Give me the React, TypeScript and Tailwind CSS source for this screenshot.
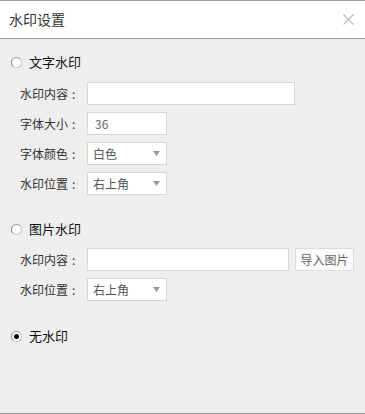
import React from 'react'

const font = { fontFamily: '"Noto Sans CJK SC", "Noto Sans", sans-serif' }

const Radio: React.FC<{ checked?: boolean; label: string }> = ({ checked, label }) => (
  <div className="flex h-[20px] items-center pl-[11px]">
    <span className="flex h-[11px] w-[11px] items-center justify-center rounded-full border border-[#c8c8c8] border-l-[#8a8a8a] border-t-[#9a9a9a] bg-white">
      {checked && <span className="h-[5px] w-[5px] rounded-full bg-black" />}
    </span>
    <span className="ml-[7px] text-[13px] text-[#111]">{label}</span>
  </div>
)

const Label: React.FC<{ text: string }> = ({ text }) => (
  <span className="flex w-[67px] shrink-0 text-[12px] text-[#333]">
    {text}
    <span className="ml-[4px]">:</span>
  </span>
)

const Select: React.FC<{ value: string }> = ({ value }) => (
  <div className="flex h-[23px] w-[80px] items-center justify-between border border-[#d6d6d6] bg-white pl-[5px] pr-[6px] text-[12px] text-[#555]">
    <span>{value}</span>
    <svg width="7" height="5" viewBox="0 0 7 5">
      <path d="M0 0 L7 0 L3.5 5 Z" fill="#999" />
    </svg>
  </div>
)

const App: React.FC = () => {
  return (
    <div style={font} className="flex h-[414px] w-[365px] flex-col border-y border-[#9a9a9a] bg-[#eeeeee]">
      <div className="flex h-[38px] shrink-0 items-center justify-between border-b border-[#9a9a9a] bg-white pl-[9px] pr-[11px]">
        <span className="text-[14px] text-[#333]">水印设置</span>
        <svg width="11" height="11" viewBox="0 0 11 11">
          <path d="M0.5 0.5 L10.5 10.5 M10.5 0.5 L0.5 10.5" stroke="#bbb" strokeWidth="1.2" />
        </svg>
      </div>

      <div className="flex flex-col pt-[13px]">
        <Radio label="文字水印" />
        <div className="mt-[10px] flex flex-col gap-[7px] pl-[20px]">
          <div className="flex items-center">
            <Label text="水印内容" />
            <div className="h-[23px] w-[208px] border border-[#d6d6d6] bg-white" />
          </div>
          <div className="flex items-center">
            <Label text="字体大小" />
            <div className="flex h-[23px] w-[80px] items-center border border-[#d6d6d6] bg-white pl-[7px] text-[12px] text-[#666]">
              36
            </div>
          </div>
          <div className="flex items-center">
            <Label text="字体颜色" />
            <Select value="白色" />
          </div>
          <div className="flex items-center">
            <Label text="水印位置" />
            <Select value="右上角" />
          </div>
        </div>

        <div className="mt-[24px]">
          <Radio label="图片水印" />
        </div>
        <div className="mt-[9px] flex flex-col gap-[7px] pl-[20px]">
          <div className="flex items-center">
            <Label text="水印内容" />
            <div className="h-[23px] w-[202px] border border-[#d6d6d6] bg-white" />
            <button className="ml-[6px] flex h-[23px] w-[59px] items-center justify-center border border-[#dcdcdc] bg-[#fafafa] text-[12px] text-[#666]">
              导入图片
            </button>
          </div>
          <div className="flex items-center">
            <Label text="水印位置" />
            <Select value="右上角" />
          </div>
        </div>

        <div className="mt-[25px]">
          <Radio checked label="无水印" />
        </div>
      </div>
    </div>
  )
}

export default App
